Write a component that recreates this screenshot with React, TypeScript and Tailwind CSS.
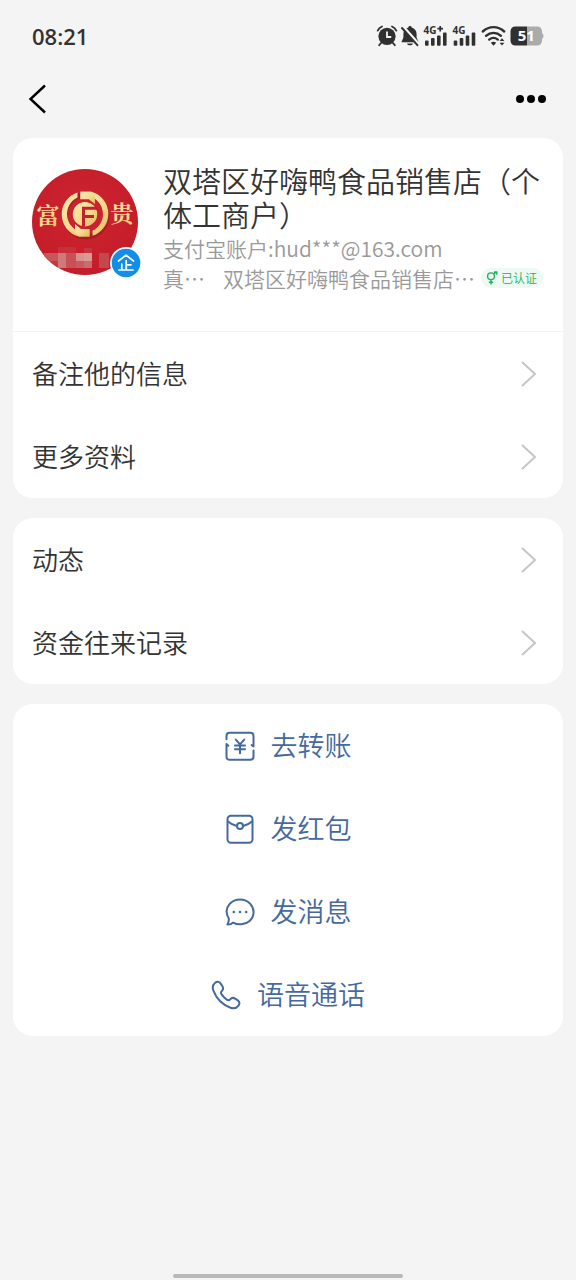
import React from 'react';

const Chevron = () => (
    <svg className="w-4 h-7 shrink-0" viewBox="0 0 16 28" fill="none" stroke="#c6c6c6" strokeWidth="2" aria-hidden="true">
        <path d="M1 2L14 14L1 26" />
    </svg>
);

const StatusIcons = () => (
    <svg className="w-[168px] h-7" viewBox="0 -2 168 28" fill="#303030" aria-label="状态">
        {/* Alarm */}
        <circle cx="11" cy="12.3" r="8.6" />
        <path d="M1.7 6.6C2.6 4.9 4.1 3.4 6 2.5M20.3 6.6C19.4 4.9 17.9 3.4 16 2.5M5.5 18.5L3.2 21.2M16.5 18.5L18.8 21.2" stroke="#303030" strokeWidth="1.8" fill="none" strokeLinecap="round" />
        <path d="M11 7.5V13H15.2" stroke="#f4f4f4" strokeWidth="1.8" fill="none" />
        {/* Muted bell */}
        <path d="M32.3 3.6C32.3 1.6 35.7 1.6 35.7 3.6C38.8 4.5 40.6 7 40.6 10V13.5L42.6 18.2H25.4L27.4 13.5V10C27.4 7 29.2 4.5 32.3 3.6Z" />
        <path d="M31 19.4H37C36.5 22 31.5 22 31 19.4Z" />
        <path d="M27 3L43 21" stroke="#f4f4f4" strokeWidth="3.4" />
        <path d="M26 4L41.4 21.2" stroke="#303030" strokeWidth="2" strokeLinecap="round" />
        {/* Signal 1 */}
        <text x="47.5" y="9.8" fontSize="10" fontWeight="700" fontFamily="'Open Sans', sans-serif">4G</text>
        <path d="M61.4 4.7H67M64.2 1.9V7.5" stroke="#303030" strokeWidth="1.7" />
        <rect x="49" y="16.5" width="3.6" height="5.3" rx="1" />
        <rect x="55" y="14" width="3.6" height="7.8" rx="1" />
        <rect x="61" y="11.5" width="3.6" height="10.3" rx="1" />
        <rect x="67" y="8.5" width="3.6" height="13.3" rx="1" />
        {/* Signal 2 */}
        <text x="76.5" y="9.8" fontSize="10" fontWeight="700" fontFamily="'Open Sans', sans-serif">4G</text>
        <rect x="77.7" y="16.5" width="3.6" height="5.3" rx="1" />
        <rect x="83.7" y="14" width="3.6" height="7.8" rx="1" />
        <rect x="89.7" y="11.5" width="3.6" height="10.3" rx="1" />
        <rect x="95.7" y="8.5" width="3.6" height="13.3" rx="1" />
        {/* Wifi */}
        <g fill="none" stroke="#303030" strokeWidth="2.4" strokeLinecap="round">
            <path d="M106.8 7.5C113.2 1.7 121.8 1.7 128.2 7.5" />
            <path d="M110 11.8C114.4 7.9 120.6 7.9 125 11.8" />
            <path d="M113.2 15.6C115.8 13.5 119.2 13.5 121.8 15.6" />
        </g>
        <path d="M114.8 18.7C116.4 17.4 118.6 17.4 120.2 18.7L117.5 21.8Z" />
        <path d="M123.6 17L126 14.2L128.4 17ZM123.6 18.8L126 21.6L128.4 18.8Z" />
        {/* Battery */}
        <path d="M139.5 2.4H151V21.6H139.5C136.4 21.6 134.5 19.7 134.5 16.6V7.4C134.5 4.3 136.4 2.4 139.5 2.4Z" />
        <path d="M151 2.4H161C164.1 2.4 166 4.3 166 7.4V9.3C168 9.8 168 14.2 166 14.7V16.6C166 19.7 164.1 21.6 161 21.6H151Z" fill="#ababab" />
        <text x="150.3" y="17.3" fontSize="15" fontWeight="700" fill="#fff" textAnchor="middle" fontFamily="'Open Sans', sans-serif">51</text>
    </svg>
);

const Avatar = () => (
    <div className="relative w-[106px] h-[106px] shrink-0">
        <svg className="w-full h-full" viewBox="0 0 106 106" role="img" aria-label="头像">
            <defs>
                <radialGradient id="red" cx="50%" cy="40%" r="60%">
                    <stop offset="0" stopColor="#cd2530" />
                    <stop offset="1" stopColor="#c31d29" />
                </radialGradient>
                <linearGradient id="gold" x1="0" y1="0" x2="1" y2="1">
                    <stop offset="0" stopColor="#fbe9ae" />
                    <stop offset="0.55" stopColor="#f5da90" />
                    <stop offset="1" stopColor="#e3b656" />
                </linearGradient>
                <clipPath id="round"><circle cx="53" cy="53" r="53" /></clipPath>
            </defs>
            <g clipPath="url(#round)">
                <rect width="106" height="106" fill="url(#red)" />
                {/* Coin emblem */}
                <circle cx="54" cy="47" r="21" fill="none" stroke="#8c1219" strokeWidth="5" opacity="0.45" />
                <path d="M45.5 23.5A23 23 0 0 0 46.5 67.5H57.5V60L51 63.2A18.3 18.3 0 0 1 45.5 28.5Z" fill="url(#gold)" />
                <path d="M60.5 66.8A23 23 0 0 0 59.5 22.8H48.5V30.3L55 27.1A18.3 18.3 0 0 1 60.5 61.8Z" fill="url(#gold)" />
                <path d="M48.5 30.3H57L63 35.5V27L59 22.8H48.5Z" fill="url(#gold)" />
                <path d="M57.5 60H49L43 54.8V63.3L47 67.5H57.5Z" fill="url(#gold)" />
                <circle cx="53" cy="45.2" r="14" fill="#c7232e" />
                <circle cx="53" cy="45.2" r="12.2" fill="url(#gold)" />
                <path d="M51.5 57.5V39.3H66M51.5 47.5H62" stroke="#c4212c" strokeWidth="3" fill="none" />
                <g fontFamily="'Noto Serif CJK SC', 'Noto Sans CJK SC', serif" fontWeight="700" fontSize="23" textAnchor="middle">
                    <text x="16" y="55" fill="url(#gold)">富</text>
                    <text x="90" y="53" fill="url(#gold)">贵</text>
                </g>
                {/* Mosaic */}
                <rect x="12" y="84" width="14" height="8" fill="#c9555a" />
                <rect x="26" y="84" width="8" height="15" fill="#d0797b" />
                <rect x="34" y="84" width="10" height="15" fill="#c85156" />
                <rect x="44" y="84" width="8" height="8" fill="#d88f8d" />
                <rect x="52" y="84" width="8" height="15" fill="#ce696d" />
                <rect x="44" y="92" width="8" height="7" fill="#ca5a5f" />
                <rect x="52" y="84" width="8" height="8" fill="#d99a93" />
                <rect x="67" y="84" width="10" height="15" fill="#c5474d" />
                <rect x="26" y="78" width="18" height="6" fill="#c5303a" />
                <rect x="52" y="79" width="8" height="5" fill="#c6343d" />
                <rect x="18" y="92" width="8" height="7" fill="#c23b43" />
            </g>
        </svg>
        <svg className="absolute -right-1 -bottom-1 w-8 h-8" viewBox="0 0 32 32" aria-label="企业">
            <circle cx="16" cy="16" r="16" fill="#fff" />
            <circle cx="16" cy="16" r="14.3" fill="#138ee8" />
            <path d="M8.5 14L16 8.2L23.5 14M16.2 13.5V22.8M11.8 17V22.8M16.2 17.8H21M9 23H23" stroke="#fff" strokeWidth="1.7" fill="none" strokeLinecap="round" strokeLinejoin="round" />
        </svg>
    </div>
);

const iconProps = {
    className: 'w-[30px] h-[30px] shrink-0',
    viewBox: '0 0 30 30',
    fill: 'none',
    stroke: 'currentColor',
    strokeWidth: 2,
    strokeLinecap: 'round' as const,
    strokeLinejoin: 'round' as const,
    'aria-hidden': true,
};

const TransferIcon = () => (
    <svg {...iconProps}>
        <path d="M1.5 8.3V5C1.5 2.9 2.7 1.7 4.7 1.7H25.3C27.3 1.7 28.5 2.9 28.5 5V15.5L26.6 14M28.5 19.5V25.5C28.5 27.6 27.3 28.8 25.3 28.8H4.7C2.7 28.8 1.5 27.6 1.5 25.5V13L3.4 14.7" />
        <path d="M10.8 8.6L15 13.4L19.2 8.6M10 14.6H20M10 18.3H20M15 13.8V22.3" />
    </svg>
);

const PacketIcon = () => (
    <svg {...iconProps}>
        <rect x="2.5" y="1.8" width="25" height="27" rx="3.5" />
        <path d="M3 7.5C5.5 9.7 8.5 11.2 11.8 12M27 7.5C24.5 9.7 21.5 11.2 18.2 12" />
        <circle cx="15" cy="12" r="3" />
    </svg>
);

const MessageIcon = () => (
    <svg {...iconProps}>
        <path d="M3.8 21.5C.9 16.7 1 11 4.7 6.8C10 .9 20 .9 25.3 6.8C30 12 29.5 19.5 24.6 23.9C20 27.9 13.2 28.3 8 25.6C6.7 27 4.9 27.6 2.4 27.5C3.6 25.5 4 23.6 3.8 21.5Z" />
        <g fill="currentColor" stroke="none">
            <circle cx="8.8" cy="15" r="1.3" />
            <circle cx="15" cy="15" r="1.3" />
            <circle cx="21.2" cy="15" r="1.3" />
        </g>
    </svg>
);

const PhoneIcon = () => (
    <svg {...iconProps}>
        <path d="M4.2 2.7C6 1.2 8.2 1.5 9.5 3.4L11.4 6.3C12.6 8.3 12.3 9.8 10.7 11.2C9.6 12.1 9.8 13.3 10.8 14.7C12.2 16.7 13.9 18.3 15.8 19.6C17.2 20.5 18.3 20.4 19.2 19.3C20.6 17.7 22.2 17.4 24.1 18.6L26.8 20.4C28.7 21.8 28.9 23.8 27.5 25.6C25.6 28.1 22.8 28.8 19.5 27.7C11.8 25 5.3 18.3 2.4 10.7C1.2 7.4 1.7 4.7 4.2 2.7Z" />
    </svg>
);

const Row = ({ label }: { label: string }) => (
    <button className="flex h-[83px] w-full items-center justify-between pl-[19px] pr-[26px] text-left text-[26px] leading-8 text-[#333]">
        <span className="pb-0.5">{label}</span>
        <Chevron />
    </button>
);

const actions = [
    { label: '去转账', Icon: TransferIcon },
    { label: '发红包', Icon: PacketIcon },
    { label: '发消息', Icon: MessageIcon },
    { label: '语音通话', Icon: PhoneIcon },
];

const App: React.FC = () => {
    return (
        <div className="flex min-h-screen flex-col bg-[#f4f4f4] font-['Noto_Sans_CJK_SC',sans-serif] font-[350] text-[#333]">
            <div className="flex h-[70px] items-center justify-between pl-8 pr-8 pt-[2px]">
                <span className="font-['Open_Sans',sans-serif] text-[22px] font-semibold leading-7">08:21</span>
                <StatusIcons />
            </div>

            <header className="flex h-[68px] items-start justify-between pl-7 pr-[29px] pt-[14px]">
                <button aria-label="返回">
                    <svg className="w-5 h-[30px]" viewBox="0 0 20 30" fill="none" stroke="#000" strokeWidth="2.4">
                        <path d="M17 1.5L2.5 15L17 28.5" />
                    </svg>
                </button>
                <button aria-label="更多">
                    <svg className="w-8 h-[30px]" viewBox="0 0 32 30" fill="#000">
                        <circle cx="5" cy="15" r="4" />
                        <circle cx="16" cy="15" r="4" />
                        <circle cx="27" cy="15" r="4" />
                    </svg>
                </button>
            </header>

            <main className="flex flex-col gap-5 px-[13px]">
                <section className="overflow-hidden rounded-[20px] bg-white">
                    <div className="flex h-[194px] gap-[25px] border-b border-[#f2f2f2] pl-[19px] pr-5 pt-[25px]">
                        <div className="pt-[6px]">
                            <Avatar />
                        </div>
                        <div className="min-w-0 flex-1">
                            <h1 className="-mr-2 text-[29px] font-[350] leading-[34px]">双塔区好嗨鸭食品销售店（个体工商户）</h1>
                            <p className="mt-0.5 text-[21px] leading-[30px] text-[#999]">支付宝账户:hud***@163.com</p>
                            <div className="flex items-center text-[21px] leading-[30px] text-[#999]">
                                <span className="mr-[18px] shrink-0">真⋯</span>
                                <span className="shrink-0">双塔区好嗨鸭食品销售店⋯</span>
                                <span className="ml-1.5 flex h-5 shrink-0 items-center gap-0.5 rounded-full bg-[#edf9f2] px-1 pr-1.5 text-[12px] leading-5 text-[#22b35e]">
                                    <svg className="w-3.5 h-3.5" viewBox="0 0 14 14" fill="none" stroke="currentColor" strokeWidth="1.4" aria-hidden="true">
                                        <circle cx="6" cy="5.3" r="3.4" />
                                        <path d="M8.4 2.9L11.5 1.2M9 1H11.8V3.8M6 8.7V13.5M3.8 11.3H8.2" />
                                    </svg>
                                    已认证
                                </span>
                            </div>
                        </div>
                    </div>
                    <Row label="备注他的信息" />
                    <Row label="更多资料" />
                </section>

                <section className="rounded-[20px] bg-white">
                    <Row label="动态" />
                    <Row label="资金往来记录" />
                </section>

                <section className="rounded-[20px] bg-white">
                    {actions.map(({ label, Icon }) => (
                        <button key={label} className="flex h-[83px] w-full items-center justify-center gap-4 text-[27px] leading-9 text-[#44699e]">
                            <Icon />
                            <span className="pb-0.5">{label}</span>
                        </button>
                    ))}
                </section>
            </main>

            <div className="mx-auto mb-0.5 mt-auto h-1 w-2/5 rounded-full bg-[#b8b8b8]" />
        </div>
    );
};

export default App;
